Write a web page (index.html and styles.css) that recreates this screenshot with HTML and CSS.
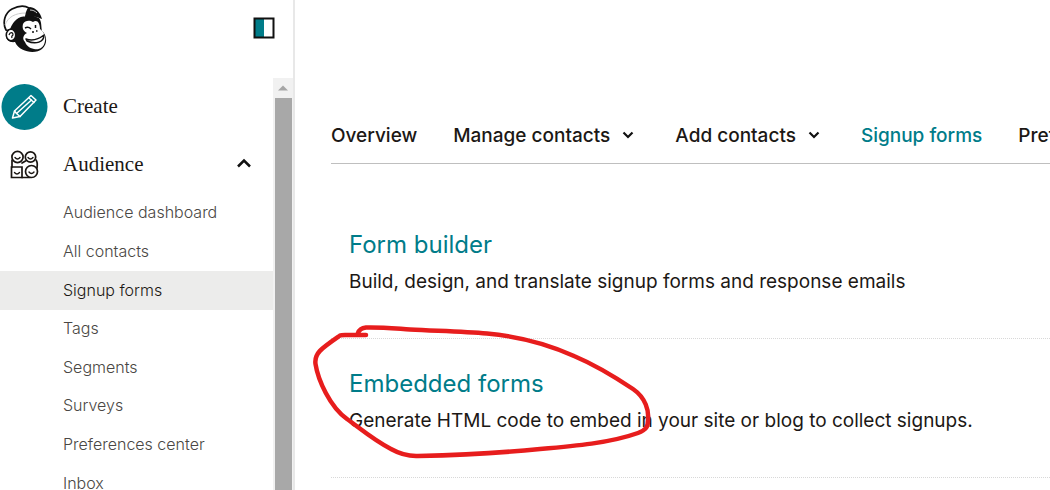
FILE: index.html
```html
<!DOCTYPE html>
<html lang="en">
<head>
<meta charset="utf-8">
<meta name="viewport" content="width=device-width, initial-scale=1">
<title>Signup forms</title>
<link rel="stylesheet" href="styles.css">
</head>
<body>
<div class="app">
  <aside class="sidebar">
    <header class="sidebar-head">
      <a class="logo" href="#" aria-label="Home">
        <svg width="48" height="50" viewBox="0 0 48 50">
          <path d="M10 24C14 16 20 12 30 12L38 15C41 19 40 24 41 28C46 32 47 41 41 46C35 51 19 50 14 39C8 40 4 36 5 31C6 28 8 26 10 27Z" fill="#111"/>
          <path d="M5 27C1 19 4 10 11 6C17 3 23 2 28 5L25 14C17 14 13 18 10 26C8 27 7 28 5 27Z" fill="#fff" stroke="#111" stroke-width="1.700" stroke-linejoin="round"/>
          <path d="M4 22C7 14 14 10 25 10" fill="none" stroke="#ccc" stroke-width="1"/>
          <path d="M24 14C25 8 26 5 29 4C35 5 39 9 41 16C35 13 31 13 24 14Z" fill="#111"/>
          <path d="M29 7C32 7 34 8 36 10" fill="none" stroke="#ccc" stroke-width="1"/>
          <path d="M22 21C24 17 29 17 32 19C36 16 39 20 39 26C43 29 45 34 44 38C43 45 38 47 33 46C28 45 25 42 24 39C21 36 22 32 26 30C22 28 21 25 22 21Z" fill="#fff"/>
          <path d="M25 36C31 38 38 36 43 32C43 39 35 42 26 38Z" fill="#fff" stroke="#111" stroke-width="1.500" stroke-linejoin="round"/>
          <path d="M24 25C26 24 28 24 30 26M34.500 22V25" fill="none" stroke="#111" stroke-width="1.500"/>
          <path d="M31 29H33M35 28H36.500" stroke="#111" stroke-width="1.300"/>
          <ellipse cx="10" cy="32" rx="4.700" ry="5.700" fill="#fff" stroke="#111" stroke-width="1.500"/>
          <path d="M8 32C9 28.500 12 29 12 32C10.500 33 10.500 34 11 35" fill="none" stroke="#111" stroke-width="1.200"/>
        </svg>
      </a>
      <button class="collapse" type="button" aria-label="Collapse menu">
        <svg width="22" height="22" viewBox="0 0 22 22">
          <path d="M1 1H11V21H1Z" fill="#007c89"/>
          <path d="M1.500 1.500H20.500V20.500H1.500Z" fill="none" stroke="#111" stroke-width="2"/>
        </svg>
      </button>
    </header>
    <div class="scroller">
      <nav class="menu" aria-label="Main">
        <a class="menu-row" href="#">
          <span class="menu-icon">
            <svg width="48" height="48" viewBox="0 0 48 48">
              <circle cx="24.500" cy="24" r="23" fill="#007c89"/>
              <g fill="none" stroke="#fff" stroke-width="1.500" stroke-linejoin="round" stroke-linecap="round">
                <path d="M12.500 35L14.500 28L31 12.500L36 17L20 33.500Z"/>
                <path d="M29 15L34 19.500M14.500 28L16.500 30.500L20 33.500M16.500 30.500L31.500 17"/>
              </g>
            </svg>
          </span>
          <span class="menu-label">Create</span>
        </a>
        <button class="menu-row" type="button" aria-expanded="true">
          <span class="menu-icon">
            <svg width="48" height="48" viewBox="0 0 48 48">
              <g fill="none" stroke="#1a1612" stroke-width="1.700" stroke-linecap="round">
                <circle cx="17.500" cy="16" r="5.600"/>
                <circle cx="30.500" cy="16" r="5.200"/>
                <path d="M11.500 26H22V36.500H11.500Z"/>
                <circle cx="31.500" cy="30.500" r="6"/>
                <path d="M12 19V26M36 19C37.500 21 37.500 24 37 27M22 36.500H30M22 22L25.500 20"/>
                <path d="M15 16.500Q17.500 19.500 20 16.500M28 16.500Q30.500 19.500 33 16.500M14.500 31.500Q17 34.500 19.500 31.500M29 31Q31.500 34 34 31" stroke-width="1.400"/>
              </g>
            </svg>
          </span>
          <span class="menu-label">Audience</span>
          <svg class="menu-arrow" width="16" height="14" viewBox="0 0 16 14"><path d="M2 8.500L8 2.500L14 8.500" fill="none" stroke="#111" stroke-width="2.500"/></svg>
        </button>
        <ul class="submenu">
          <li><a href="#">Audience dashboard</a></li>
          <li><a href="#">All contacts</a></li>
          <li><a class="current" href="#" aria-current="page">Signup forms</a></li>
          <li><a href="#">Tags</a></li>
          <li><a href="#">Segments</a></li>
          <li><a href="#">Surveys</a></li>
          <li><a href="#">Preferences center</a></li>
          <li><a href="#">Inbox</a></li>
        </ul>
      </nav>
      <div class="scrollbar" aria-hidden="true">
        <svg width="10" height="6" viewBox="0 0 10 6"><path d="M0 5.500L5 0.500L10 5.500Z" fill="#a5a5a5"/></svg>
        <div class="thumb"></div>
      </div>
    </div>
  </aside>
  <main class="content">
    <nav class="tabs" aria-label="Audience">
      <a href="#">Overview</a>
      <button type="button">Manage contacts
        <svg width="12" height="8" viewBox="0 0 12 8"><path d="M1.500 1.500L6 6L10.500 1.500" fill="none" stroke="#111" stroke-width="2.200"/></svg>
      </button>
      <button type="button">Add contacts
        <svg width="12" height="8" viewBox="0 0 12 8"><path d="M1.500 1.500L6 6L10.500 1.500" fill="none" stroke="#111" stroke-width="2.200"/></svg>
      </button>
      <a class="active" href="#" aria-current="page">Signup forms</a>
      <a href="#">Preferences center</a>
    </nav>
    <ul class="forms">
      <li>
        <h2><a href="#">Form builder</a></h2>
        <p>Build, design, and translate signup forms and response emails</p>
      </li>
      <li>
        <h2><a href="#">Embedded forms</a></h2>
        <p>Generate HTML code to embed in your site or blog to collect signups.</p>
        <svg class="marker" width="344" height="138" viewBox="310 322 344 138" aria-hidden="true">
          <path d="M358 333C359 330 362 328 366 327.500C380 327 395 328.500 410 329.500C440 331 465 331.500 487 333.500C520 336.500 550 345 574 356C593 364 618 379 633 389C646 398 649 411 648 420C648 427 646 430 638 433C610 443 575 446 540 449C500 453 460 455 418 456C407 456.500 400 454 391 449C375 441 362 430 347 419C330 407 318 380 315.500 364C314 353 322 348 340 335.500Q341 335 345 335H366" fill="none" stroke="#e71d1d" stroke-width="4.500" stroke-linecap="round" stroke-linejoin="round"/>
        </svg>
      </li>
    </ul>
  </main>
</div>
</body>
</html>
```
FILE: styles.css
```css
* {
  box-sizing: border-box;
}

body {
  margin: 0;
  background: #fff;
  color: #1c1815;
  font-family: Inter, "Liberation Sans", sans-serif;
}

a {
  color: inherit;
  text-decoration: none;
}

button {
  padding: 0;
  border: 0;
  background: none;
  color: inherit;
  font: inherit;
}

ul,
h2,
p {
  margin: 0;
  padding: 0;
  list-style: none;
}

svg {
  display: block;
  flex: none;
}

.app {
  display: flex;
  height: 100vh;
  overflow: hidden;
}

.sidebar {
  display: flex;
  flex: none;
  flex-direction: column;
  width: 295px;
  border-right: 2px solid #e8e8e8;
}

.sidebar-head {
  display: flex;
  flex: none;
  align-items: center;
  justify-content: space-between;
  height: 78px;
  padding: 0 18px 22px 1px;
}

.scroller {
  display: flex;
  flex: 1;
  min-height: 0;
}

.menu {
  flex: 1;
  overflow: hidden;
}

.menu-row {
  display: flex;
  align-items: center;
  gap: 15px;
  width: 100%;
  height: 58px;
  font-family: "Liberation Serif", serif;
  font-size: 21px;
}

.menu-label {
  padding-bottom: 2px;
}

.menu-arrow {
  margin-left: auto;
  margin-right: 21px;
}

.submenu {
  display: grid;
  grid-auto-rows: 1fr;
  height: 309px;
  font-size: 16px;
  font-weight: 300;
}

.submenu a {
  display: flex;
  align-items: center;
  height: 100%;
  padding: 0 0 2px 63px;
  color: #4a4744;
}

.submenu .current {
  background: #ececeb;
  color: #1c1815;
}

.scrollbar {
  display: flex;
  flex: none;
  flex-direction: column;
  align-items: center;
  gap: 7px;
  width: 20px;
  padding-top: 7px;
  background: #f1f1f1;
}

.thumb {
  flex: 1;
  width: 17px;
  background: #a8a8a8;
}

.content {
  flex: 1;
  min-width: 0;
  padding: 105px 0 0 36px;
}

.tabs {
  display: flex;
  gap: 36px;
  height: 59px;
  padding-top: 2px;
  border-bottom: 1px solid #bfbfbf;
  overflow: hidden;
  font-size: 19px;
  font-weight: 500;
  white-space: nowrap;
}

.tabs a,
.tabs button {
  display: flex;
  flex: none;
  align-items: center;
  gap: 12px;
}

.tabs button {
  padding-right: 5px;
}

.tabs .active,
.forms a {
  color: #007c89;
}

.forms {
  padding-top: 36px;
}

.forms li {
  position: relative;
  height: 139px;
  padding: 29px 18px;
  border-bottom: 1px dotted #d8d8d8;
}

.forms h2 {
  font-size: 24px;
  font-weight: 400;
  line-height: 32px;
}

.forms p {
  padding-top: 7px;
  font-size: 19px;
  line-height: 28px;
  white-space: nowrap;
}

.marker {
  position: absolute;
  top: -17px;
  left: -21px;
}
```
